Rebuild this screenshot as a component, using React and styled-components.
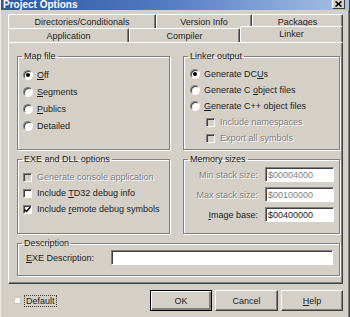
import React from 'react';
import styled, { createGlobalStyle, css } from 'styled-components';

const GlobalStyle = createGlobalStyle`
  html, body { margin: 0; padding: 0; background: #d4d0c8; }
  body {
    font-family: "Liberation Sans", Arial, sans-serif;
    font-size: 9px;
    color: #1c1c1c;
  }
  * { box-sizing: border-box; }
`;

const Window = styled.div`
  width: 350px;
  height: 317px;
  overflow: hidden;
  background: #d4d0c8;
  display: flex;
  flex-direction: column;
  border-left: 1px solid #ecebe6;
  border-right: 1px solid #404040;
  box-shadow: inset -1px 0 #808080;
`;

const TitleBar = styled.div`
  flex: none;
  height: 10px;
  overflow: hidden;
  display: flex;
  align-items: flex-start;
  justify-content: space-between;
  padding: 0 4px 0 2px;
  background: linear-gradient(90deg, #2e56a4 0%, #5079c2 45%, #a9c0e6 100%);
`;

const Title = styled.span`
  color: #fff;
  font-weight: bold;
  font-size: 10px;
  line-height: 10px;
  margin-top: -0.5px;
`;

const CloseBox = styled.div`
  width: 13px;
  height: 9px;
  background: #d4d0c8;
  border: 1px solid;
  border-color: #d4d0c8 #404040 #404040 #fff;
  border-top: none;
  display: flex;
  align-items: center;
  justify-content: center;
`;

const Client = styled.div`
  flex: 1;
  display: flex;
  flex-direction: column;
  padding: 4px 6px 0 7px;
`;

const TabStrip = styled.div`
  display: flex;
  flex-direction: column;
  height: 28px;
`;

const TabRow = styled.div`
  display: flex;
  height: 14px;
`;

const Tab = styled.div`
  flex: ${p => (p.$w ? `0 0 ${p.$w}px` : '1')};
  height: 14px;
  border: 1px solid;
  border-color: #fff #404040 transparent #fff;
  border-bottom: none;
  border-radius: 2px 2px 0 0;
  box-shadow: inset -1px 0 #808080;
  display: flex;
  align-items: center;
  justify-content: center;
  line-height: 11px;
  padding-top: 1px;
  background: #d4d0c8;
  ${p =>
    p.$active &&
    css`
      height: 16px;
      margin-top: -2px;
      margin-bottom: -1px;
      position: relative;
      z-index: 1;
      align-items: flex-start;
      padding-top: 2px;
    `}
`;

const Panel = styled.div`
  height: 242px;
  border: 1px solid;
  border-color: #fff #404040 #404040 #fff;
  box-shadow: inset -1px -1px #808080;
  padding: 8px 4px 7px 8px;
  display: grid;
  grid-template-columns: 153px 157px;
  grid-template-rows: 99px 80px 38px;
  column-gap: 13px;
  row-gap: 4px;
`;

const Group = styled.fieldset`
  margin: 0;
  padding: 0;
  min-width: 0;
  border: 1px solid #808080;
  box-shadow: inset 1px 1px #fff, 1px 1px #fff;
  grid-column: ${p => (p.$wide ? '1 / -1' : 'auto')};
`;

const Legend = styled.legend`
  margin-left: 4px;
  padding: 0 2px;
  font-size: 9px;
  line-height: 11px;
`;

const GroupBody = styled.div`
  display: flex;
  flex-direction: column;
  gap: ${p => p.$gap || 0}px;
  padding: ${p => p.$pt || 0}px ${p => p.$pr || 0}px 0 ${p => p.$pl || 0}px;
`;

const Option = styled.div`
  display: flex;
  align-items: center;
  height: ${p => p.$h || 16}px;
  gap: 4px;
  padding-left: ${p => p.$indent || 0}px;
  white-space: nowrap;
  color: ${p => (p.$disabled ? '#808080' : 'inherit')};
  text-shadow: ${p => (p.$disabled ? '1px 1px #fff' : 'none')};
`;

const RadioDot = styled.span`
  flex: none;
  width: 10px;
  height: 10px;
  border-radius: 50%;
  background: #fff;
  border: 1px solid;
  border-color: #808080 #fff #fff #808080;
  box-shadow: inset 1px 1px #404040;
  display: flex;
  align-items: center;
  justify-content: center;
  &::after {
    content: '';
    width: 4px;
    height: 4px;
    border-radius: 50%;
    background: ${p => (p.$on ? '#000' : 'transparent')};
  }
`;

const CheckBox = styled.span`
  flex: none;
  width: 9px;
  height: 9px;
  background: ${p => (p.$disabled ? '#d4d0c8' : '#fff')};
  border: 1px solid;
  border-color: #808080 #fff #fff #808080;
  box-shadow: inset 1px 1px #404040;
  display: flex;
  align-items: center;
  justify-content: center;
  margin-right: 1px;
`;

const Key = styled.span`
  text-decoration: underline;
`;

const FieldRow = styled.div`
  display: flex;
  align-items: center;
  justify-content: ${p => (p.$end ? 'flex-end' : 'flex-start')};
  gap: 7px;
  height: 15px;
`;

const FieldLabel = styled.span`
  white-space: nowrap;
  width: ${p => (p.$w ? `${p.$w}px` : 'auto')};
  color: ${p => (p.$disabled ? '#808080' : 'inherit')};
  text-shadow: ${p => (p.$disabled ? '1px 1px #fff' : 'none')};
`;

const Edit = styled.div`
  width: ${p => (p.$w ? `${p.$w}px` : 'auto')};
  flex: ${p => (p.$w ? 'none' : '1')};
  height: 15px;
  background: #fff;
  border: 1px solid;
  border-color: #808080 #fff #fff #808080;
  box-shadow: inset 1px 1px #404040;
  padding: 0 2px;
  display: flex;
  align-items: center;
  color: ${p => (p.$disabled ? '#808080' : 'inherit')};
`;

const Footer = styled.div`
  flex: 1;
  display: flex;
  align-items: center;
  padding-left: 6px;
`;

const DefaultBox = styled.span`
  width: 7px;
  height: 7px;
  background: #fff;
  border: 1px solid #c8c4bc;
`;

const FocusLabel = styled.span`
  margin-left: 3px;
  padding: 1px 2px;
  outline: 1px dotted #404040;
  outline-offset: -1px;
`;

const Buttons = styled.div`
  margin-left: auto;
  display: flex;
  gap: 3px;
`;

const Button = styled.div`
  width: ${p => p.$w}px;
  height: 21px;
  display: flex;
  align-items: center;
  justify-content: center;
  background: #d4d0c8;
  border: 1px solid;
  border-color: #fff #404040 #404040 #fff;
  box-shadow: inset -1px -1px #808080;
  ${p =>
    p.$default &&
    css`
      border: 1px solid #000;
      box-shadow: inset 1px 1px #fff, inset -2px -2px #808080, inset -1px -1px #404040;
    `}
`;

const CloseIcon = () => (
  <svg width="7" height="6" viewBox="0 0 7 6">
    <path d="M0.5 0.5 L6.5 5.5 M6.5 0.5 L0.5 5.5" stroke="#000" strokeWidth="1.6" />
  </svg>
);

const Tick = () => (
  <svg width="7" height="7" viewBox="0 0 7 7">
    <path d="M0.5 3.5 L2.5 5.5 L6.5 1" stroke="#000" strokeWidth="1.5" fill="none" />
  </svg>
);

const App = () => {
  return (
    <React.Fragment>
      <GlobalStyle />
      <Window>
        <TitleBar>
          <Title>Project Options</Title>
          <CloseBox>
            <CloseIcon />
          </CloseBox>
        </TitleBar>
        <Client>
          <TabStrip>
            <TabRow>
              <Tab $w={148}>Directories/Conditionals</Tab>
              <Tab $w={96}>Version Info</Tab>
              <Tab>Packages</Tab>
            </TabRow>
            <TabRow>
              <Tab $w={121}>Application</Tab>
              <Tab $w={111}>Compiler</Tab>
              <Tab $active>Linker</Tab>
            </TabRow>
          </TabStrip>

          <Panel>
            <Group>
              <Legend>Map file</Legend>
              <GroupBody $pt={4} $pl={5}>
                <Option $h={17}>
                  <RadioDot $on />
                  <span>
                    <Key>O</Key>ff
                  </span>
                </Option>
                <Option $h={17}>
                  <RadioDot />
                  <span>
                    <Key>S</Key>egments
                  </span>
                </Option>
                <Option $h={17}>
                  <RadioDot />
                  <span>
                    <Key>P</Key>ublics
                  </span>
                </Option>
                <Option $h={17}>
                  <RadioDot />
                  <span>Detailed</span>
                </Option>
              </GroupBody>
            </Group>

            <Group>
              <Legend>Linker output</Legend>
              <GroupBody $pt={4} $pl={6}>
                <Option>
                  <RadioDot $on />
                  <span>
                    Generate DC<Key>U</Key>s
                  </span>
                </Option>
                <Option>
                  <RadioDot />
                  <span>
                    Generate C <Key>o</Key>bject files
                  </span>
                </Option>
                <Option>
                  <RadioDot />
                  <span>
                    <Key>G</Key>enerate C++ object files
                  </span>
                </Option>
                <Option $indent={16} $disabled>
                  <CheckBox $disabled />
                  <span>Include namespaces</span>
                </Option>
                <Option $indent={16} $disabled>
                  <CheckBox $disabled />
                  <span>Export all symbols</span>
                </Option>
              </GroupBody>
            </Group>

            <Group>
              <Legend>EXE and DLL options</Legend>
              <GroupBody $pt={4} $pl={5}>
                <Option $disabled>
                  <CheckBox $disabled />
                  <span>Generate console application</span>
                </Option>
                <Option>
                  <CheckBox />
                  <span>
                    Include <Key>T</Key>D32 debug info
                  </span>
                </Option>
                <Option>
                  <CheckBox>
                    <Tick />
                  </CheckBox>
                  <span>
                    Include <Key>r</Key>emote debug symbols
                  </span>
                </Option>
              </GroupBody>
            </Group>

            <Group>
              <Legend>Memory sizes</Legend>
              <GroupBody $pt={2} $pr={5} $gap={5}>
                <FieldRow $end>
                  <FieldLabel $disabled>Min stack size:</FieldLabel>
                  <Edit $w={69} $disabled>$00004000</Edit>
                </FieldRow>
                <FieldRow $end>
                  <FieldLabel $disabled>Max stack size:</FieldLabel>
                  <Edit $w={69} $disabled>$00100000</Edit>
                </FieldRow>
                <FieldRow $end>
                  <FieldLabel>
                    <Key>I</Key>mage base:
                  </FieldLabel>
                  <Edit $w={69}>$00400000</Edit>
                </FieldRow>
              </GroupBody>
            </Group>

            <Group $wide>
              <Legend>Description</Legend>
              <GroupBody $pt={1} $pl={8} $pr={6}>
                <FieldRow>
                  <FieldLabel $w={78}>
                    <Key>E</Key>XE Description:
                  </FieldLabel>
                  <Edit />
                </FieldRow>
              </GroupBody>
            </Group>
          </Panel>

          <Footer>
            <DefaultBox />
            <FocusLabel>Default</FocusLabel>
            <Buttons>
              <Button $w={62} $default>OK</Button>
              <Button $w={63}>Cancel</Button>
              <Button $w={62}>
                <span>
                  <Key>H</Key>elp
                </span>
              </Button>
            </Buttons>
          </Footer>
        </Client>
      </Window>
    </React.Fragment>
  );
};

export default App;
